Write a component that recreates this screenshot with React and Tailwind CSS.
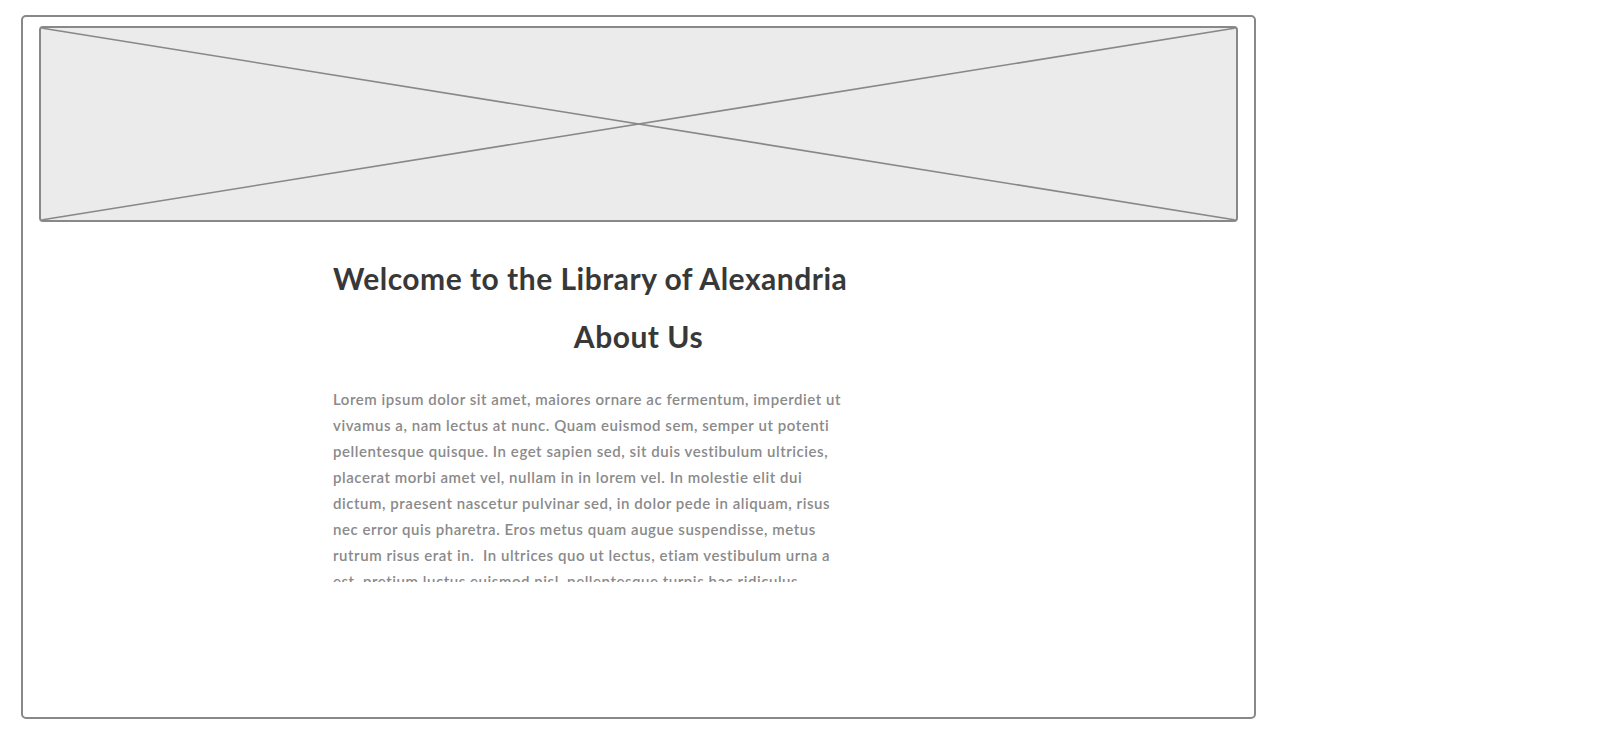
import React from 'react';

// lines broken where the mockup breaks them
const loremLines = [
  'Lorem ipsum dolor sit amet, maiores ornare ac fermentum, imperdiet ut',
  'vivamus a, nam lectus at nunc. Quam euismod sem, semper ut potenti',
  'pellentesque quisque. In eget sapien sed, sit duis vestibulum ultricies,',
  'placerat morbi amet vel, nullam in in lorem vel. In molestie elit dui',
  'dictum, praesent nascetur pulvinar sed, in dolor pede in aliquam, risus',
  'nec error quis pharetra. Eros metus quam augue suspendisse, metus',
  'rutrum risus erat in.\u00a0 In ultrices quo ut lectus, etiam vestibulum urna a',
  'est, pretium luctus euismod nisl, pellentesque turpis hac ridiculus',
  'massa. Venenatis sit ultricies nunc, ipsum quam ornare tellus.',
];

function ImagePlaceholder() {
  return (
    <div className="h-[196px] rounded-[4px] border-2 border-[#888888] bg-[#ebebeb] overflow-hidden">
      <svg className="block w-full h-full" viewBox="0 0 100 100" preserveAspectRatio="none">
        <line x1="0" y1="0" x2="100" y2="100" stroke="#888888" strokeWidth="1.6" vectorEffect="non-scaling-stroke" />
        <line x1="100" y1="0" x2="0" y2="100" stroke="#888888" strokeWidth="1.6" vectorEffect="non-scaling-stroke" />
      </svg>
    </div>
  );
}

export default function App() {
  return (
    <div className="min-h-screen bg-white pl-[21px] pt-[15px]" style={{ fontFamily: 'Lato, "Open Sans", sans-serif' }}>
      <div className="w-[1235px] h-[704px] rounded-[5px] border-2 border-[#888888] bg-white px-4 pt-[9px]">
        <ImagePlaceholder />

        <h1 className="mt-[38px] ml-[294px] w-[512px] whitespace-nowrap text-center text-[30px] leading-[36px] font-bold tracking-[0.5px] text-[#383838]">
          Welcome to the Library of Alexandria
        </h1>

        <h2 className="mt-[22px] text-center text-[30px] leading-[36px] font-bold tracking-[0.5px] text-[#383838]">
          About Us
        </h2>

        <div className="mt-[32px] ml-[294px] w-[520px] h-[196px] overflow-hidden">
          <p className="text-[15px] leading-[26px] font-semibold tracking-[0.55px] text-[#8a8a8a]">
            {loremLines.map((line, i) => (
              <span key={i} className="block whitespace-nowrap">{line}</span>
            ))}
          </p>
        </div>
      </div>
    </div>
  );
}
